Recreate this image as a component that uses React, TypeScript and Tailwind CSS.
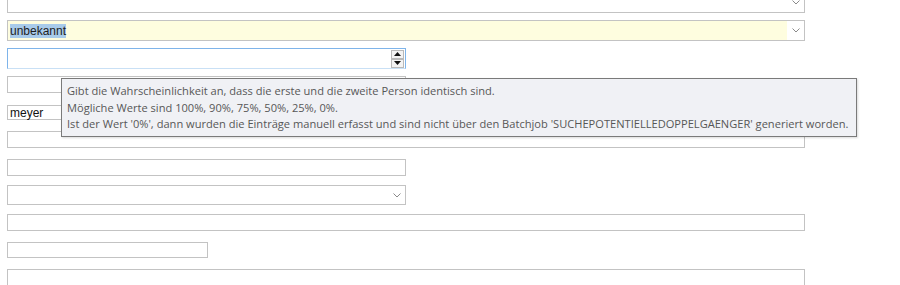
import React from "react";

function Chevron() {
  return (
    <svg width="8" height="5" viewBox="0 0 8 5" fill="none" aria-hidden="true">
      <polyline points="0.5,0.5 4,4 7.5,0.5" stroke="#8a8a8a" strokeWidth="1" />
    </svg>
  );
}

function SelectBox({ className, yellow, value }: { className: string; yellow?: boolean; value?: string }) {
  return (
    <div className={`flex border border-[#c3c3c3] bg-white ${className}`}>
      <div className={`flex flex-1 items-center px-[2px] ${yellow ? "bg-[#fefddf]" : ""}`}>
        {value && (
          <span className="bg-[#a8cbea] text-[12px] leading-[14px] text-[#1e1e1e]">{value}</span>
        )}
      </div>
      <div className="flex w-[17px] items-center justify-center">
        <Chevron />
      </div>
    </div>
  );
}

function SpinButton({ up }: { up?: boolean }) {
  return (
    <div className="flex h-[9px] w-[13px] items-center justify-center border border-[#b9b9b9] bg-[#f3f3f3]">
      <svg width="7" height="4" viewBox="0 0 7 4" aria-hidden="true">
        <polygon points={up ? "3.5,0 7,4 0,4" : "0,0 7,0 3.5,4"} fill="#111" />
      </svg>
    </div>
  );
}

export default function App() {
  return (
    <div className="relative h-[285px] w-[900px] overflow-hidden bg-white font-['Liberation_Sans',Arial,sans-serif]">
      <div className="flex flex-col pl-[7px]">
        <SelectBox className="-mt-[8px] h-[21px] w-[798px]" />
        <SelectBox className="mt-[7px] h-[21px] w-[798px]" yellow value="unbekannt" />

        <div className="mt-[7px] flex h-[21px] w-[399px] items-center justify-end border border-[#7eb4ea] border-b-[#c9e0f5] pr-[1px]">
          <div className="flex flex-col">
            <SpinButton up />
            <SpinButton />
          </div>
        </div>

        <div className="mt-[7px] h-[17px] w-[399px] border border-[#c3c3c3]" />

        <div className="mt-[12px] flex h-[15px] w-[399px] items-center border border-[#c3c3c3] px-[2px] text-[12px] text-[#111]">
          meyer
        </div>

        <div className="mt-[11px] h-[17px] w-[798px] border border-[#c3c3c3]" />
        <div className="mt-[11px] h-[17px] w-[399px] border border-[#c3c3c3]" />
        <SelectBox className="mt-[9px] h-[20px] w-[399px]" />
        <div className="mt-[9px] h-[17px] w-[798px] border border-[#c3c3c3]" />
        <div className="mt-[11px] h-[16px] w-[201px] border border-[#c3c3c3]" />
        <div className="mt-[11px] h-[17px] w-[798px] border border-[#c3c3c3]" />
      </div>

      <div className="absolute left-[61px] top-[78px] w-[796px] whitespace-nowrap border border-[#7a7a7a] bg-[#f0f1f5] px-[5px] pb-[3px] pt-[4px] font-['Open_Sans',sans-serif] text-[11.1px] leading-[16.5px] text-[#575757] shadow-[1px_1px_2px_rgba(0,0,0,0.15)]">
        <div>Gibt die Wahrscheinlichkeit an, dass die erste und die zweite Person identisch sind.</div>
        <div>Mögliche Werte sind 100%, 90%, 75%, 50%, 25%, 0%.</div>
        <div>
          Ist der Wert &apos;0%&apos;, dann wurden die Einträge manuell erfasst und sind nicht über den Batchjob
          &apos;SUCHEPOTENTIELLEDOPPELGAENGER&apos; generiert worden.
        </div>
      </div>
    </div>
  );
}
